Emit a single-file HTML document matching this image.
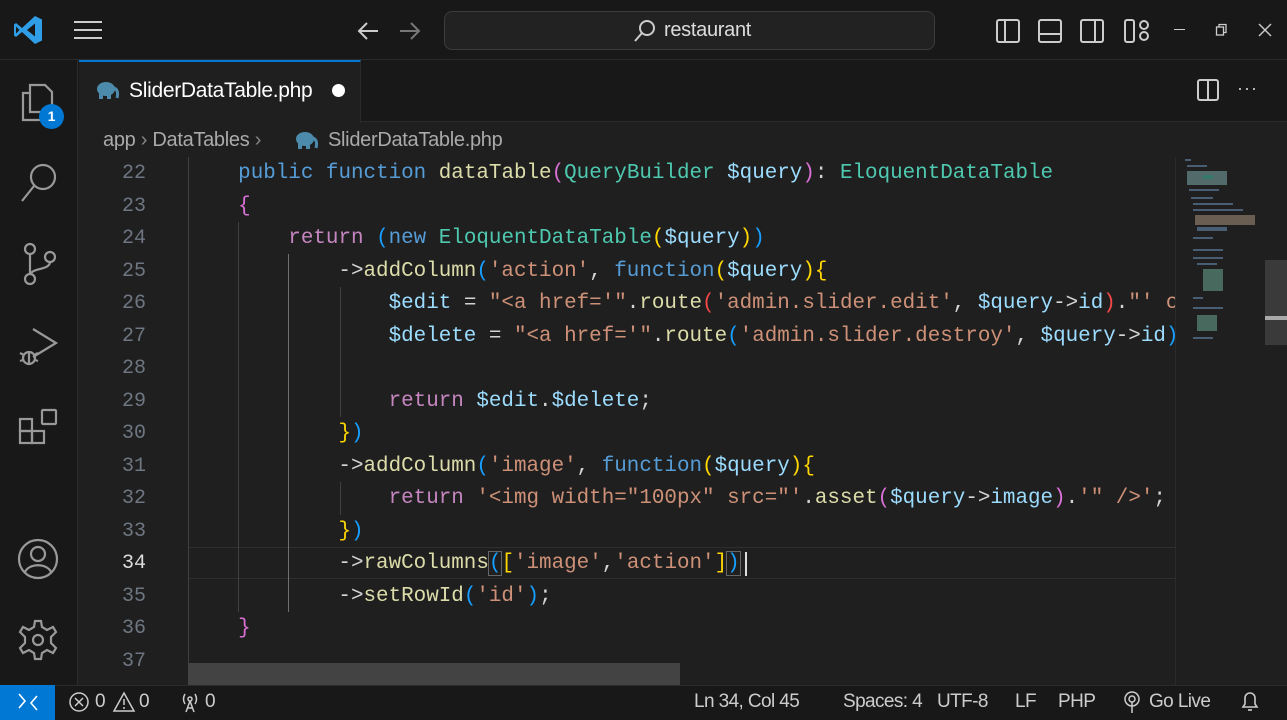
<!DOCTYPE html>
<html><head><meta charset="utf-8"><style>
*{margin:0;padding:0;box-sizing:border-box}
body{width:1287px;height:720px;background:#1f1f1f;overflow:hidden;position:relative;font-family:"Liberation Sans",sans-serif;color:#ccc}
.abs{position:absolute}
#title{left:0;top:0;width:1287px;height:60px;background:#181818;border-bottom:1px solid #2b2b2b}
#act{left:0;top:60px;width:78px;height:625px;background:#181818;border-right:1px solid #2b2b2b}
#tabs{left:78px;top:60px;width:1209px;height:62px;background:#181818;border-bottom:1px solid #2b2b2b}
#tab{left:79px;top:60px;width:282px;height:63px;background:#1f1f1f;border-top:2px solid #0078d4;border-right:1px solid #2b2b2b}
#status{left:0;top:685px;width:1287px;height:35px;background:#181818;border-top:1px solid #2b2b2b}
.st{position:absolute;top:691px;font-size:19px;letter-spacing:-0.6px;color:#ccc}
.code{font-family:"Liberation Mono",monospace;font-size:20.9px;white-space:pre;line-height:32.5px;color:#d4d4d4}
.ln{position:absolute;left:90px;width:56px;text-align:right;font-family:"Liberation Mono",monospace;font-size:20px;color:#6e7681}
.k{color:#569cd6}.f{color:#dcdcaa}.c{color:#4ec9b0}.v{color:#9cdcfe}.s{color:#ce9178}.r{color:#c586c0}
.g{color:#ffd700}.p{color:#da70d6}.b{color:#179fff}.red{color:#f44747}
.guide{position:absolute;width:1px;background:#404040}
svg{position:absolute}
</style></head><body>
<div id="title" class="abs"></div>
<svg style="left:12px;top:14px" width="32" height="32" viewBox="0 0 32 32"><path d="M23 2 L30 5.5 V26.5 L23 30 L10 18 L4 23 L2 21.5 V10.5 L4 9 L10 14 Z M23 9.5 L15 16 L23 22.5 Z M4 12.5 V19.5 L7.5 16 Z" fill="#2f9ee6"/></svg>
<svg style="left:73px;top:19px" width="30" height="22"><g stroke="#ccc" stroke-width="2"><line x1="1" y1="3" x2="29" y2="3"/><line x1="1" y1="11" x2="29" y2="11"/><line x1="1" y1="19" x2="29" y2="19"/></g></svg>
<svg style="left:356px;top:19px" width="70" height="24" fill="none" stroke-width="2"><path d="M22 12H3M11 4 3 12 11 20" stroke="#ccc"/><path d="M44 12H63M55 4 63 12 55 20" stroke="#777"/></svg>
<div class="abs" style="left:444px;top:11px;width:491px;height:39px;border:1px solid #3c3c3c;border-radius:8px;background:#222"></div>
<svg style="left:633px;top:19px" width="24" height="24" fill="none" stroke="#ccc" stroke-width="2"><circle cx="14" cy="9" r="7"/><line x1="9" y1="14" x2="2" y2="22"/></svg>
<div class="abs" style="left:664px;top:19px;font-size:20px;color:#ddd;letter-spacing:-0.3px">restaurant</div>
<svg style="left:995px;top:17px" width="160" height="28" fill="none" stroke="#ccc" stroke-width="2">
<rect x="2" y="3" width="22" height="22" rx="2"/><line x1="10" y1="3" x2="10" y2="25"/>
<rect x="44" y="3" width="22" height="22" rx="2"/><line x1="44" y1="17" x2="66" y2="17"/>
<rect x="86" y="3" width="22" height="22" rx="2"/><line x1="100" y1="3" x2="100" y2="25"/>
<rect x="130" y="3" width="9" height="22" rx="2"/><circle cx="149" cy="8" r="4"/><circle cx="149" cy="19" r="4"/></svg>
<div class="abs" style="left:1174px;top:29px;width:11px;height:1px;background:#ccc"></div>
<svg style="left:1215px;top:23px" width="14" height="14" fill="none" stroke="#ccc" stroke-width="1.3"><rect x="1.5" y="4" width="7" height="8"/><path d="M4 4V1.5H11V9.5H8.5"/></svg>
<svg style="left:1258px;top:23px" width="14" height="14" stroke="#ccc" stroke-width="1.4"><line x1="1" y1="1" x2="13" y2="13"/><line x1="13" y1="1" x2="1" y2="13"/></svg>

<div id="act" class="abs"></div>
<svg style="left:18px;top:80px" width="40" height="45" fill="none" stroke="#999" stroke-width="2.2"><path d="M12 5H27L34 12V32H12Z"/><path d="M12 13H5V40H24V32"/></svg>
<div class="abs" style="left:39px;top:104px;width:25px;height:25px;border-radius:50%;background:#0078d4;color:#fff;font-size:14px;font-weight:bold;text-align:center;line-height:25px">1</div>
<svg style="left:18px;top:160px" width="42" height="45" fill="none" stroke="#999" stroke-width="2.2"><circle cx="25" cy="17" r="12"/><line x1="16" y1="26" x2="4" y2="41"/></svg>
<svg style="left:18px;top:240px" width="42" height="48" fill="none" stroke="#999" stroke-width="2.2"><circle cx="12" cy="9" r="5"/><circle cx="12" cy="39" r="5"/><circle cx="32" cy="17" r="5"/><line x1="12" y1="14" x2="12" y2="34"/><path d="M32 22C32 30 14 28 13 34"/></svg>
<svg style="left:16px;top:325px" width="45" height="45" fill="none" stroke="#999" stroke-width="2.2"><path d="M17 4L40 18L17 32"/><circle cx="13" cy="33" r="6"/><path d="M4 28L8 30M4 36L7 35M22 28L18 30M22 36L19 35M13 27V40"/></svg>
<svg style="left:16px;top:408px" width="45" height="45" fill="none" stroke="#999" stroke-width="2.2"><rect x="4" y="11" width="12" height="12"/><rect x="4" y="23" width="12" height="12"/><rect x="16" y="23" width="12" height="12"/><rect x="26" y="2" width="14" height="14" rx="1"/></svg>
<svg style="left:16px;top:537px" width="45" height="45" fill="none" stroke="#999" stroke-width="2.2"><circle cx="22" cy="22" r="19"/><circle cx="22" cy="17" r="7"/><path d="M9 35C13 26 31 26 35 35"/></svg>
<svg style="left:16px;top:618px" width="45" height="45" fill="none" stroke="#999" stroke-width="2.2"><circle cx="22" cy="22" r="5"/><path d="M19 3H25L26 9 31 12 37 9 40 14 35 19V25L40 30 37 35 31 32 26 35 25 41H19L18 35 13 32 7 35 4 30 9 25V19L4 14 7 9 13 12 18 9Z"/></svg>

<div id="tabs" class="abs"></div>
<div id="tab" class="abs"></div>
<svg style="left:94px;top:80px" width="26" height="20"><ellipse cx="12" cy="9" rx="9" ry="7" fill="#4d8bac"/><rect x="5" y="12" width="4" height="7" fill="#4d8bac"/><rect x="13" y="12" width="4" height="7" fill="#4d8bac"/><path d="M20 8Q25 10 23 18" stroke="#4d8bac" stroke-width="3" fill="none"/></svg>
<div class="abs" style="left:129px;top:79px;font-size:21px;color:#fff;letter-spacing:-0.3px">SliderDataTable.php</div>
<div class="abs" style="left:332px;top:84px;width:13px;height:13px;border-radius:50%;background:#fff"></div>
<svg style="left:1196px;top:78px" width="24" height="24" fill="none" stroke="#ccc" stroke-width="2"><rect x="2" y="2" width="20" height="20" rx="2"/><line x1="12" y1="2" x2="12" y2="22"/></svg>
<div class="abs" style="left:1237px;top:78px;font-size:18px;color:#ccc;letter-spacing:1px">···</div>

<div class="abs" style="left:103px;top:129px;font-size:20px;color:#aaa;letter-spacing:-0.3px">app <span style="color:#888">›</span> DataTables <span style="color:#888">›</span></div>
<svg style="left:293px;top:130px" width="26" height="20"><ellipse cx="12" cy="9" rx="9" ry="7" fill="#4d8bac"/><rect x="5" y="12" width="4" height="7" fill="#4d8bac"/><rect x="13" y="12" width="4" height="7" fill="#4d8bac"/><path d="M20 8Q25 10 23 18" stroke="#4d8bac" stroke-width="3" fill="none"/></svg>
<div class="abs" style="left:328px;top:129px;font-size:20px;color:#aaa;letter-spacing:-0.3px">SliderDataTable.php</div>

<div class="abs" style="left:188px;top:547px;width:987px;height:32px;border-top:1px solid #2e2e2e;border-bottom:1px solid #2e2e2e"></div>
<div class="guide" style="left:188px;top:157px;height:528px"></div>
<div class="guide" style="left:238px;top:222px;height:390px"></div>
<div class="guide" style="left:288px;top:254px;height:358px;background:#707070"></div>
<div class="guide" style="left:340px;top:287px;height:130px"></div>
<div class="guide" style="left:340px;top:482px;height:33px"></div>

<div class="ln" style="top:158px;line-height:32.5px">22<br>23<br>24<br>25<br>26<br>27<br>28<br>29<br>30<br>31<br>32<br>33<br><span style="color:#ddd">34</span><br>35<br>36<br>37</div>

<div class="abs code" style="left:188px;top:158px;width:987px;overflow:hidden">    <span class="k">public</span> <span class="k">function</span> <span class="f">dataTable</span><span class="p">(</span><span class="c">QueryBuilder</span> <span class="v">$query</span><span class="p">)</span>: <span class="c">EloquentDataTable</span>
    <span class="p">{</span>
        <span class="r">return</span> <span class="b">(</span><span class="k">new</span> <span class="c">EloquentDataTable</span><span class="g">(</span><span class="v">$query</span><span class="g">)</span><span class="b">)</span>
            -&gt;<span class="f">addColumn</span><span class="b">(</span><span class="s">'action'</span>, <span class="k">function</span><span class="g">(</span><span class="v">$query</span><span class="g">){</span>
                <span class="v">$edit</span> = <span class="s">"&lt;a href='"</span>.<span class="f">route</span><span class="red">(</span><span class="s">'admin.slider.edit'</span>, <span class="v">$query</span>-&gt;<span class="v">id</span><span class="red">)</span>.<span class="s">"' c</span>
                <span class="v">$delete</span> = <span class="s">"&lt;a href='"</span>.<span class="f">route</span><span class="b">(</span><span class="s">'admin.slider.destroy'</span>, <span class="v">$query</span>-&gt;<span class="v">id</span><span class="b">)</span>

                <span class="r">return</span> <span class="v">$edit</span>.<span class="v">$delete</span>;
            <span class="g">}</span><span class="b">)</span>
            -&gt;<span class="f">addColumn</span><span class="b">(</span><span class="s">'image'</span>, <span class="k">function</span><span class="g">(</span><span class="v">$query</span><span class="g">){</span>
                <span class="r">return</span> <span class="s">'&lt;img width="100px" src="'</span>.<span class="f">asset</span><span class="p">(</span><span class="v">$query</span>-&gt;<span class="v">image</span><span class="p">)</span>.<span class="s">'" /&gt;'</span>;
            <span class="g">}</span><span class="b">)</span>
            -&gt;<span class="f">rawColumns</span><span class="b" style="outline:1px solid #666">(</span><span class="g">[</span><span class="s">'image'</span>,<span class="s">'action'</span><span class="g">]</span><span class="b" style="outline:1px solid #666">)</span>
            -&gt;<span class="f">setRowId</span><span class="b">(</span><span class="s">'id'</span><span class="b">)</span>;
    <span class="p">}</span>
</div>
<div class="abs" style="left:745px;top:552px;width:2px;height:24px;background:#ddd"></div>

<div class="abs" style="left:188px;top:663px;width:492px;height:22px;background:#434343"></div>
<div class="abs" style="left:1175px;top:157px;width:1px;height:528px;background:#2b2b2b"></div>
<svg style="left:1183px;top:157px" width="80" height="190"><g fill="#5c7a9a" opacity="0.7">
<rect x="2" y="2" width="6" height="2"/><rect x="4" y="8" width="20" height="2"/><rect x="4" y="14" width="40" height="14" fill="#6a8a8a"/><rect x="20" y="18" width="10" height="4" fill="#3f9f8f"/>
<rect x="6" y="32" width="30" height="2"/><rect x="8" y="40" width="22" height="2"/><rect x="10" y="46" width="40" height="2"/><rect x="10" y="52" width="50" height="2"/><rect x="12" y="58" width="60" height="10" fill="#8a7a6a"/><rect x="14" y="70" width="30" height="4"/>
<rect x="10" y="80" width="20" height="2"/><rect x="10" y="92" width="30" height="2"/><rect x="10" y="100" width="30" height="2"/><rect x="14" y="106" width="20" height="2"/>
<rect x="20" y="112" width="20" height="22" fill="#5a8a7a"/><rect x="10" y="140" width="10" height="2"/><rect x="10" y="150" width="30" height="2"/><rect x="14" y="158" width="20" height="16" fill="#5a8a7a"/><rect x="10" y="180" width="20" height="2"/></g></svg>
<div class="abs" style="left:1265px;top:260px;width:22px;height:85px;background:#3a3a3a"></div>
<div class="abs" style="left:1265px;top:316px;width:22px;height:4px;background:#aaa"></div>

<div id="status" class="abs"></div>
<div class="abs" style="left:0;top:685px;width:55px;height:35px;background:#0078d4"></div>
<svg style="left:16px;top:692px" width="24" height="20" fill="none" stroke="#fff" stroke-width="1.6"><path d="M3 2L9 9L3 16M21 4L15 11L21 18"/></svg>
<svg style="left:68px;top:690px" width="24" height="24" fill="none" stroke="#ccc" stroke-width="1.5"><circle cx="11" cy="12" r="9"/><path d="M7 8L15 16M15 8L7 16"/></svg>
<div class="st" style="left:95px">0</div>
<svg style="left:112px;top:690px" width="24" height="24" fill="none" stroke="#ccc" stroke-width="1.5"><path d="M12 3L22 21H2Z"/><line x1="12" y1="9" x2="12" y2="15"/><line x1="12" y1="17" x2="12" y2="19"/></svg>
<div class="st" style="left:139px">0</div>
<svg style="left:178px;top:690px" width="24" height="24" fill="none" stroke="#ccc" stroke-width="1.5"><circle cx="12" cy="9" r="2"/><path d="M7 4Q4 9 7 14M17 4Q20 9 17 14M12 11L8 22M12 11L16 22M9 18H15"/></svg>
<div class="st" style="left:205px">0</div>
<div class="st" style="left:694px">Ln 34, Col 45</div>
<div class="st" style="left:843px">Spaces: 4</div>
<div class="st" style="left:937px">UTF-8</div>
<div class="st" style="left:1015px">LF</div>
<div class="st" style="left:1058px">PHP</div>
<svg style="left:1121px;top:690px" width="22" height="24" fill="none" stroke="#ccc" stroke-width="1.5"><circle cx="11" cy="9" r="3"/><circle cx="11" cy="9" r="7"/><line x1="11" y1="12" x2="11" y2="23"/></svg>
<div class="st" style="left:1149px">Go Live</div>
<svg style="left:1239px;top:689px" width="22" height="26" fill="none" stroke="#ccc" stroke-width="1.6"><path d="M4 18H18L16 15V9A5 5 0 0 0 6 9V15Z"/><path d="M9 21H13"/></svg>
</body></html>
